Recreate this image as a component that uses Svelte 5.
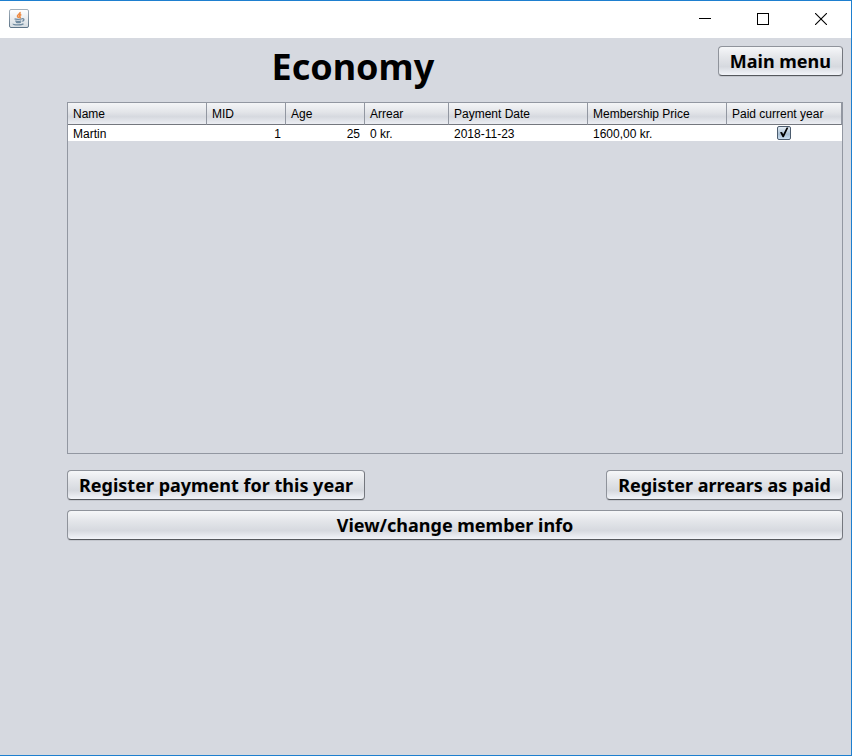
<script>
  const columns = [
    { label: 'Name', width: 139 },
    { label: 'MID', width: 79, numeric: true },
    { label: 'Age', width: 79, numeric: true },
    { label: 'Arrear', width: 84 },
    { label: 'Payment Date', width: 139 },
    { label: 'Membership Price', width: 139 },
    { label: 'Paid current year', width: 115 }
  ];
  const total = columns.reduce((sum, c) => sum + c.width, 0);

  let members = $state([
    { cells: ['Martin', '1', '25', '0 kr.', '2018-11-23', '1600,00 kr.'], paid: true }
  ]);
</script>

<div class="window">
  <header class="titlebar">
    <svg class="app-icon" width="20" height="19" viewBox="0 0 20 19" aria-hidden="true">
      <defs>
        <linearGradient id="tile" x1="0" y1="0" x2="0" y2="1">
          <stop offset="0" stop-color="#ffffff" />
          <stop offset="1" stop-color="#d5dce2" />
        </linearGradient>
        <linearGradient id="edge" x1="0" y1="0" x2="0" y2="1">
          <stop offset="0" stop-color="#a3b0bb" />
          <stop offset="1" stop-color="#5d7488" />
        </linearGradient>
      </defs>
      <rect x="0.5" y="0.5" width="19" height="18" rx="1.5" fill="url(#tile)" stroke="url(#edge)" />
      <path d="M11 3c1 2-3 2.6-2.5 4.2.2.7 1 1 1 1.8M12.3 5.5c-2 .8-2 1.7-1.3 2.4.4.5.2 1-.4 1.4" fill="none" stroke="#ee8a42" stroke-width="1.6" />
      <path d="M5.5 9.8c1 .8 6 .8 7.5 0M6.3 11.8c1.5.7 4.5.7 6 0M7 13.2c1.2.5 3.6.5 4.8 0M13 9.8c2.4-.6 2.6 1.6.3 2.6M4.3 14.8c-.6 1.4 8.4 1.6 10.2 0" fill="none" stroke="#6f8aa0" stroke-width="1.3" />
    </svg>
    <div class="controls">
      <button aria-label="Minimize"><svg width="12" height="12" shape-rendering="crispEdges"><path d="M0 5.5h12" stroke="#000" /></svg></button>
      <button aria-label="Maximize"><svg width="12" height="12" shape-rendering="crispEdges"><rect x="0.5" y="0.5" width="11" height="11" fill="none" stroke="#000" /></svg></button>
      <button aria-label="Close"><svg width="12" height="12"><path d="M0 0L12 12M12 0L0 12" stroke="#000" stroke-width="1.1" /></svg></button>
    </div>
  </header>

  <main>
    <div class="heading">
      <h1>Economy</h1>
      <button class="btn">Main menu</button>
    </div>

    <div class="body">
      <div class="pane">
        <table>
          <colgroup>
            {#each columns as c}<col style:width="{(c.width / total) * 100}%" />{/each}
          </colgroup>
          <thead>
            <tr>{#each columns as c}<th scope="col">{c.label}</th>{/each}</tr>
          </thead>
          <tbody>
            {#each members as m}
              <tr>
                {#each m.cells as cell, i}<td class:numeric={columns[i].numeric}>{cell}</td>{/each}
                <td class="check">
                  <label>
                    <input type="checkbox" bind:checked={m.paid} aria-label="Paid current year" />
                    <svg width="14" height="14" viewBox="0 0 14 14" aria-hidden="true"><path d="M3 6.2L5 6L6.2 8.2L9.6 1.4H11.4L6.8 11.2H5.6Z" fill="#000" /></svg>
                  </label>
                </td>
              </tr>
            {/each}
          </tbody>
        </table>
      </div>

      <div class="actions">
        <button class="btn">Register payment for this year</button>
        <button class="btn">Register arrears as paid</button>
      </div>
      <button class="btn">View/change member info</button>
    </div>
  </main>
</div>

<style>
  :global(body) { margin: 0; }
  .window {
    box-sizing: border-box;
    min-height: 100vh;
    border: 1px solid #1e7fcf;
    border-left: 0;
    background: #d6d9e0;
    color: #000;
  }
  .titlebar {
    display: flex;
    align-items: flex-start;
    justify-content: space-between;
    height: 37px;
    padding-left: 9px;
    background: #fff;
  }
  .app-icon { display: block; margin-top: 8px; }
  .controls { display: flex; height: 36px; padding-right: 1px; }
  .controls button {
    display: flex;
    align-items: center;
    justify-content: center;
    width: 58px;
    padding: 0;
    border: 0;
    background: none;
  }
  .heading {
    display: flex;
    align-items: flex-start;
    gap: 12px;
    padding: 8px 8px 0 0;
  }
  h1 {
    flex: 1;
    margin: 0 0 2px;
    font: bold 36px/42px "Noto Sans", "DejaVu Sans", sans-serif;
    text-align: center;
  }
  .btn {
    height: 30px;
    padding: 0 11px;
    border: 1px solid #8f939b;
    border-right-color: #74777e;
    border-bottom-color: #55585d;
    border-radius: 4px;
    background: linear-gradient(#f6f7f9, #e4e6ea 35%, #d6d9df 70%, #f2f4f9);
    box-shadow: 0 1px 0 #c3c6cd;
    color: #000;
    font: bold 18px/28px "Noto Sans", "DejaVu Sans", sans-serif;
    white-space: nowrap;
  }
  .body {
    display: flex;
    flex-direction: column;
    padding: 12px 8px 0 67px;
  }
  .pane {
    box-sizing: border-box;
    height: 352px;
    border: 1px solid #9297a1;
    font: 12px/16px "Liberation Sans", Arial, sans-serif;
  }
  table { width: 100%; table-layout: fixed; border-collapse: separate; border-spacing: 0; }
  th {
    height: 21px;
    padding: 0 4px 0 5px;
    border-right: 1px solid #9297a1;
    border-bottom: 1px solid #74777e;
    background: linear-gradient(#f4f5f7, #e2e4e8 45%, #d6d9df 65%, #eceef3);
    font-weight: normal;
    text-align: left;
    white-space: nowrap;
  }
  td { height: 14px; padding: 2px 5px 0; line-height: 14px; background: #fff; white-space: nowrap; }
  .numeric { text-align: right; }
  .check { padding: 0 6px 0 5px; }
  .check label { display: grid; width: 14px; height: 14px; margin: 0 auto; }
  .check input, .check svg { grid-area: 1 / 1; margin: 0; }
  .check input {
    appearance: none;
    box-sizing: border-box;
    width: 14px;
    height: 14px;
    border: 1px solid #4c5c6e;
    border-radius: 2px;
    background: linear-gradient(#e4edf5, #a9bfd3 60%, #cbdff2);
  }
  .check svg { pointer-events: none; z-index: 1; }
  .check input:not(:checked) + svg { visibility: hidden; }
  .actions {
    display: flex;
    justify-content: space-between;
    margin: 16px 0 10px;
  }
</style>
